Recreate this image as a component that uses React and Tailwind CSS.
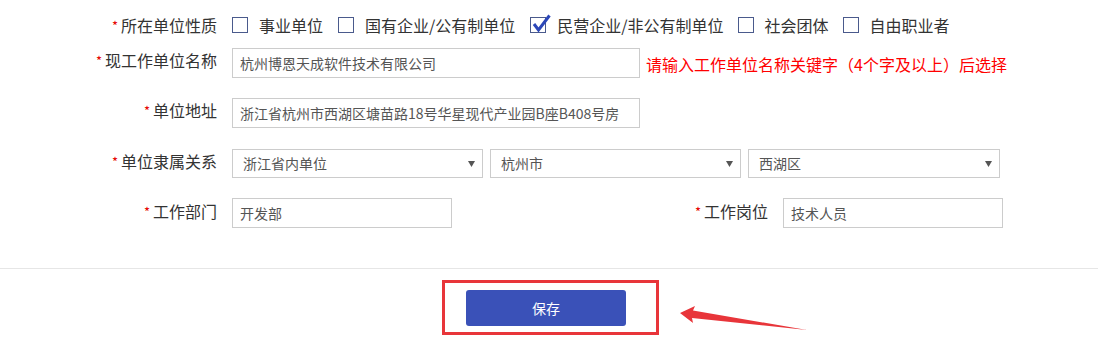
import React from 'react';

const font = { fontFamily: '"Noto Sans CJK SC", "Liberation Sans", sans-serif' };

function Label({ children, className = '' }) {
  return (
    <div className={`flex items-center justify-end text-[16px] leading-[20px] text-[#333] ${className}`}>
      <span className="mr-[3px] text-[13px] leading-[13px] text-[#e60000]">*</span>
      {children}
    </div>
  );
}

function Check({ checked, label }) {
  return (
    <label className="flex items-center gap-[11px] text-[16px] leading-[18px] text-[#333]">
      <span className="relative block h-[16px] w-[16px] border border-[#4a5a8c] bg-white">
        {checked && (
          <svg className="absolute -top-[4px] left-[1px]" width="19" height="19" viewBox="0 0 19 19">
            <path d="M2 10 L6.5 16 L17.5 1.5" fill="none" stroke="#2c47b8" strokeWidth="3" strokeLinejoin="miter" />
          </svg>
        )}
      </span>
      <span>{label}</span>
    </label>
  );
}

function Select({ value, className = '' }) {
  return (
    <div className={`flex h-[29px] items-center justify-between border border-[#ccc] bg-white pl-[10px] pr-[7px] text-[14px] text-[#555] ${className}`}>
      <span>{value}</span>
      <svg width="7" height="6" viewBox="0 0 7 6"><path d="M0 0 H7 L3.5 6 Z" fill="#555" /></svg>
    </div>
  );
}

function TextBox({ value, className = '' }) {
  return (
    <div className={`flex h-[30px] items-center border border-[#ccc] bg-white pl-[7px] text-[14px] text-[#555] ${className}`}>
      {value}
    </div>
  );
}

export default function App() {
  return (
    <div className="relative h-[345px] w-[1120px] overflow-hidden bg-white" style={font}>
      <div className="w-[1098px]">
        {/* 单位性质 */}
        <div className="mt-[16px] flex h-[18px] items-center">
          <Label className="w-[217px]">所在单位性质</Label>
          <div className="ml-[15px] flex items-center">
            <Check label="事业单位" />
            <div className="ml-[15px]"><Check label="国有企业/公有制单位" /></div>
            <div className="ml-[15px]"><Check checked label="民营企业/非公有制单位" /></div>
            <div className="ml-[14px]"><Check label="社会团体" /></div>
            <div className="ml-[14px]"><Check label="自由职业者" /></div>
          </div>
        </div>

        <div className="mt-[14px] flex items-start">
          <Label className="mt-[2px] w-[217px]">现工作单位名称</Label>
          <TextBox className="ml-[15px] w-[408px]" value="杭州博恩天成软件技术有限公司" />
          <div className="ml-[6px] mt-[6px] text-[16px] leading-[20px] text-[#f00]">
            请输入工作单位名称关键字（4个字及以上）后选择
          </div>
        </div>

        <div className="mt-[20px] flex items-start">
          <Label className="mt-[2px] w-[217px]">单位地址</Label>
          <TextBox className="ml-[15px] w-[408px]" value="浙江省杭州市西湖区塘苗路18号华星现代产业园B座B408号房" />
        </div>

        <div className="mt-[21px] flex items-start">
          <Label className="mt-[2px] w-[217px]">单位隶属关系</Label>
          <div className="ml-[15px] flex gap-[7px]">
            <Select className="w-[251px]" value="浙江省内单位" />
            <Select className="w-[251px]" value="杭州市" />
            <Select className="w-[252px]" value="西湖区" />
          </div>
        </div>

        <div className="mt-[20px] flex items-start">
          <Label className="mt-[3px] w-[217px]">工作部门</Label>
          <TextBox className="ml-[15px] w-[220px]" value="开发部" />
          <Label className="mt-[3px] w-[316px]">工作岗位</Label>
          <TextBox className="ml-[15px] w-[220px]" value="技术人员" />
        </div>

        <div className="mt-[40px] border-t border-[#e6e6e6]" />

        <div className="mt-[11px] flex">
          <div className="ml-[442px] border-[3px] border-[#e8353a] pb-[6px] pl-[21px] pr-[30px] pt-[7px]">
            <button className="flex h-[36px] w-[160px] items-center justify-center rounded-[3px] bg-[#3a51b8] text-[14px] text-white">
              保存
            </button>
          </div>
        </div>
      </div>

      {/* 标注箭头 */}
      <svg className="absolute left-[676px] top-[302px]" width="136" height="34" viewBox="0 0 136 34">
        <path d="M4 11 L19 4 L17 8.5 L131 28 L16 16 L17 21 Z" fill="#e8353a" />
      </svg>
    </div>
  );
}
